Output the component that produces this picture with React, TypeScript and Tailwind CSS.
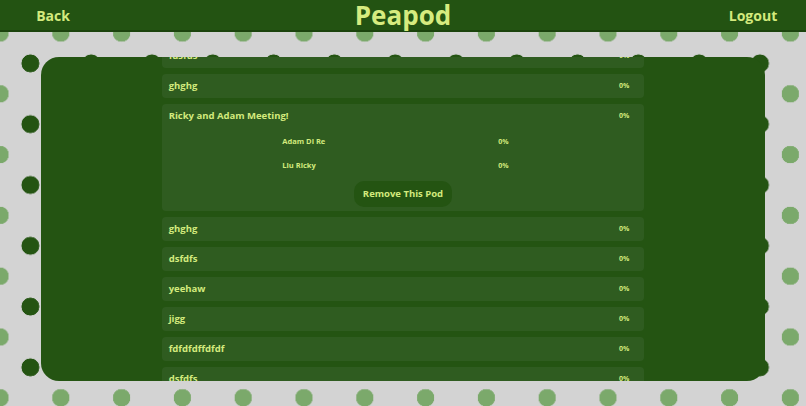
import React from 'react'

interface Member {
  name: string
  progress: number
}

interface Pod {
  id: number
  title: string
  progress: number
  members?: Member[]
}

const pods: Pod[] = [
  { id: 1, title: 'fdsfds', progress: 0 },
  { id: 2, title: 'ghghg', progress: 0 },
  {
    id: 3,
    title: 'Ricky and Adam Meeting!',
    progress: 0,
    members: [
      { name: 'Adam Di Re', progress: 0 },
      { name: 'Liu Ricky', progress: 0 },
    ],
  },
  { id: 4, title: 'ghghg', progress: 0 },
  { id: 5, title: 'dsfdfs', progress: 0 },
  { id: 6, title: 'yeehaw', progress: 0 },
  { id: 7, title: 'jigg', progress: 0 },
  { id: 8, title: 'fdfdfdffdfdf', progress: 0 },
  { id: 9, title: 'dsfdfs', progress: 0 },
  { id: 10, title: 'fdsfds', progress: 0 },
]

const PodRow: React.FC<{ pod: Pod }> = ({ pod }) => {
  const open = !!pod.members
  return (
    <div className="rounded-[4px] bg-[#2f5c20]">
      <div className="flex h-[24px] items-center justify-between pl-[7px] pr-[15px]">
        <span className="text-[9.5px] font-bold text-[#d3ea7d]">{pod.title}</span>
        <span className="text-[7px] font-bold text-[#d3ea7d]">{pod.progress}%</span>
      </div>

      {/* expanded pod: members + remove */}
      {open && (
        <div className="flex flex-col pt-[2px] pb-[4px]">
          {pod.members!.map((m) => (
            <div key={m.name} className="mx-auto flex h-[24px] w-1/2 items-center justify-between pr-[15px]">
              <span className="text-[7.5px] font-bold text-[#d3ea7d]">{m.name}</span>
              <span className="text-[7px] font-bold text-[#d3ea7d]">{m.progress}%</span>
            </div>
          ))}
          <button className="mx-auto mt-[3px] h-[26px] w-[98px] rounded-[10px] bg-[#245412] text-[9.5px] font-bold text-[#d3ea7d]">
            Remove This Pod
          </button>
        </div>
      )}
    </div>
  )
}

export default function App() {
  return (
    <div className="flex h-[406px] w-full flex-col bg-[#d3d3d3] bg-[radial-gradient(circle,#7ba96b_8.5px,transparent_9px),radial-gradient(circle,#245412_8.7px,transparent_9.2px)] bg-size-[60.8px_60.8px] bg-position-[-30.4px_2.6px,0px_33px] font-['Open_Sans',sans-serif]">
      {/* top bar */}
      <header className="flex h-[32px] shrink-0 items-center justify-between border-b-2 border-[#1b430d] bg-[#235312]">
        <button className="w-[106px] text-center text-[14px] font-bold text-[#d3ea7d]">Back</button>
        <h1 className="text-[26px] leading-[30px] font-bold text-[#d6ec7f]">Peapod</h1>
        <button className="w-[106px] text-center text-[14px] font-bold text-[#d3ea7d]">Logout</button>
      </header>

      {/* pod list */}
      <main className="flex min-h-0 flex-1 px-[41px] py-[25px]">
        <div className="flex-1 overflow-hidden rounded-[18px] bg-[#245412]">
          <div className="mx-auto -mt-[13px] flex w-2/3 flex-col gap-[6px]">
            {pods.map((pod) => (
              <PodRow key={pod.id} pod={pod} />
            ))}
          </div>
        </div>
      </main>
    </div>
  )
}
